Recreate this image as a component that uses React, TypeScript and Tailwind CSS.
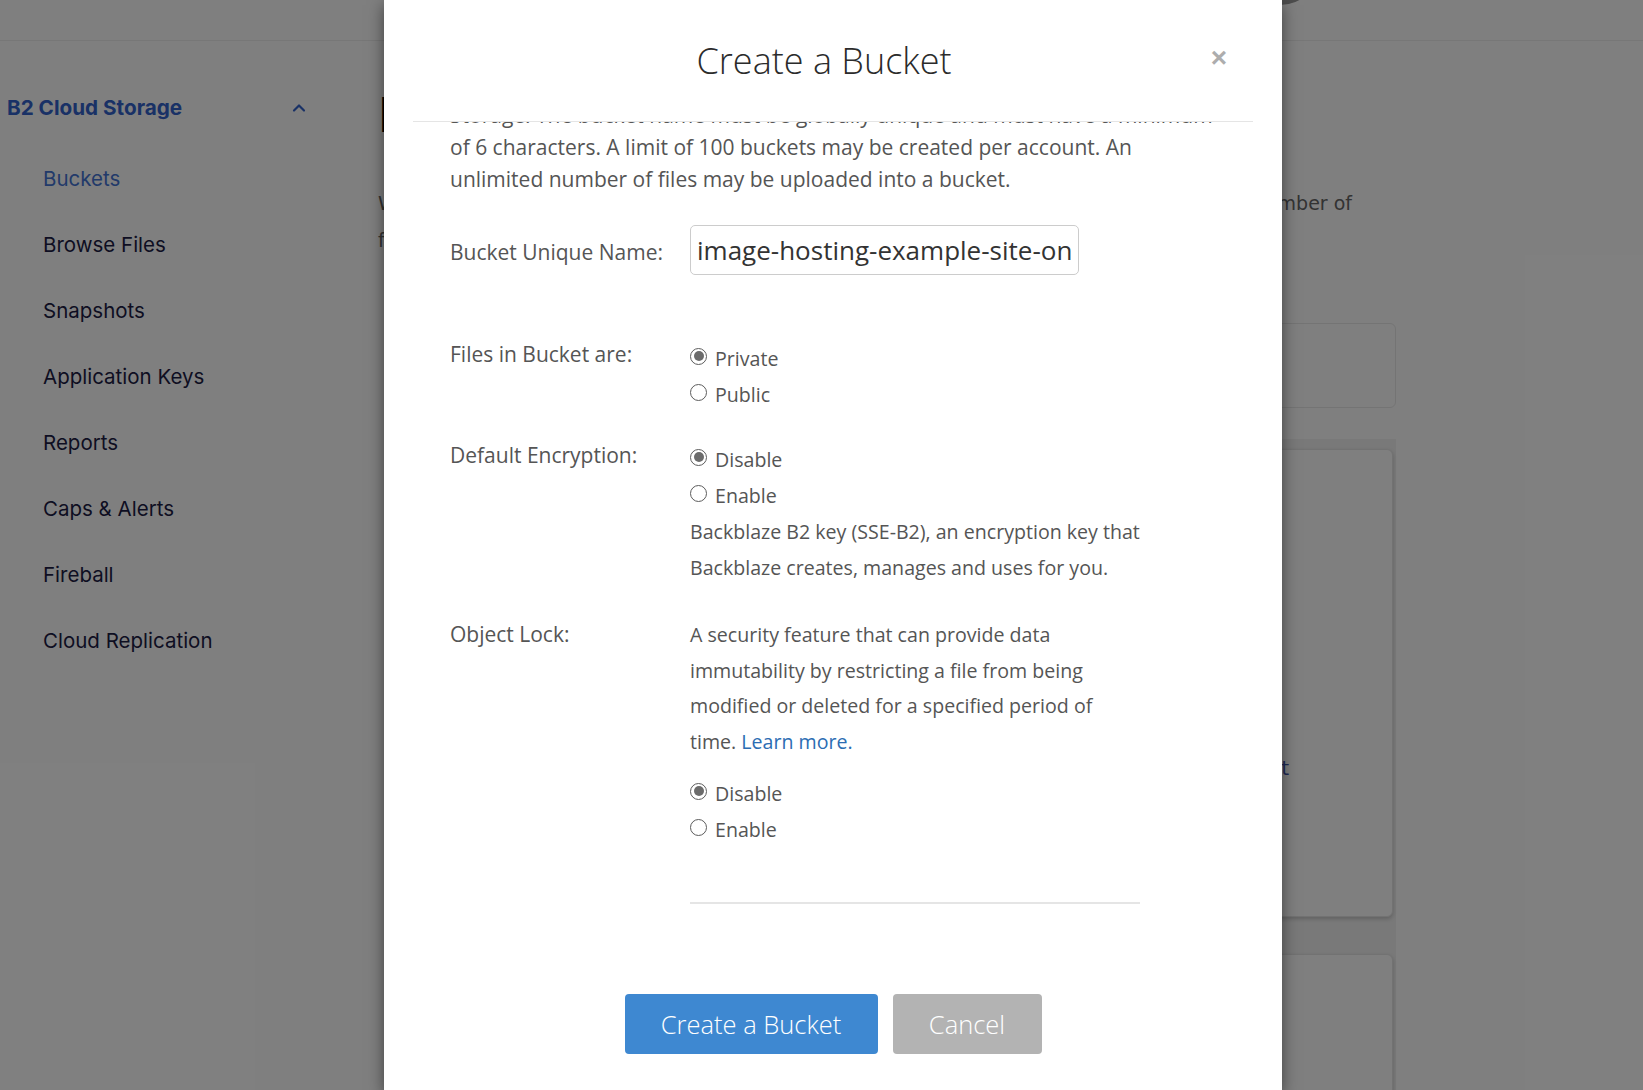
import React from 'react';
import { ChevronUp } from 'lucide-react';

const navItems = [
  'Buckets',
  'Browse Files',
  'Snapshots',
  'Application Keys',
  'Reports',
  'Caps & Alerts',
  'Fireball',
  'Cloud Replication',
];

const Radio: React.FC<{ checked?: boolean; label: string }> = ({ checked, label }) => (
  <div className="flex h-[36px] items-center">
    <span className="flex h-[17px] w-[17px] shrink-0 items-center justify-center rounded-full border border-[#5c5c5c] bg-white">
      {checked && <span className="h-[10px] w-[10px] rounded-full bg-[#6b6b6b]" />}
    </span>
    <span className="ml-[8px] pt-[5px] text-[19.6px] text-[#555]">{label}</span>
  </div>
);

const FormRow: React.FC<{ label: string; className?: string; labelClass?: string; children: React.ReactNode }> = ({
  label,
  className = '',
  labelClass = '',
  children,
}) => (
  <div className={`flex ${className}`}>
    <div className={`w-[240px] shrink-0 text-[21px] leading-[36px] text-[#555] ${labelClass}`}>{label}</div>
    <div className="flex-1">{children}</div>
  </div>
);

export default function App() {
  return (
    <div className="relative h-[1090px] w-[1643px] overflow-hidden bg-white font-['Inter',sans-serif]">
      {/* page behind the dialog */}
      <header className="relative h-[41px] border-b border-[#efefef]">
        <div className="absolute left-[1240px] top-[-75px] h-[80px] w-[80px] rounded-full bg-[#9a9a9a]" />
      </header>

      <div className="flex">
        <aside className="w-[376px] shrink-0 pl-[7px] pt-[47px]">
          <div className="flex h-[40px] w-[302px] items-center justify-between">
            <span className="text-[20.7px] font-bold text-[#3262cc]">B2 Cloud Storage</span>
            <ChevronUp className="h-[20px] w-[20px] text-[#3262cc]" strokeWidth={2.6} />
          </div>
          <nav className="mt-[18px] pl-[36px]">
            {navItems.map((item, i) => (
              <div
                key={item}
                className={`flex h-[66px] items-center text-[20.5px] ${i === 0 ? 'text-[#4474d4]' : 'text-[#1c1c45]'}`}
              >
                {item}
              </div>
            ))}
          </nav>
        </aside>

        <main className="w-[1020px] shrink-0 pt-[50px] font-['DejaVu_Sans',sans-serif]">
          <h1 className="pl-[2px] font-['Inter',sans-serif] text-[48px] leading-[48px] text-black">Buckets</h1>
          <div className="mt-[46px] w-[976px] pl-[2px] text-[19px] leading-[37px] text-[#666]">
            <div className="flex justify-between">
              <span>With B2 Cloud Storage you can create buckets and</span>
              <span>store an unlimited number of</span>
            </div>
            <div>files in each bucket.</div>
          </div>
          <div className="ml-[30px] mt-[64px] h-[85px] rounded-[6px] border border-[#e8e8e8]" />
          <div className="ml-[30px] mt-[31px] bg-[#f2f2f2] pr-[3px] pt-[10px]">
            <div className="h-[468px] rounded-[6px] border border-[#e5e5e5] bg-white pt-[305px] shadow-[0_2px_4px_rgba(0,0,0,0.2)]">
              <div className="flex justify-end pr-[103px] text-[20px] leading-[26px] text-[#3e54aa]">Create Snapshot</div>
            </div>
            <div className="mt-[37px] h-[300px] rounded-[6px] border border-[#e5e5e5] bg-white shadow-[0_2px_4px_rgba(0,0,0,0.2)]" />
          </div>
        </main>
      </div>

      {/* overlay + dialog */}
      <div className="absolute inset-0 bg-black/50">
        <div className="ml-[384px] flex h-[1090px] w-[898px] flex-col overflow-hidden bg-white font-['Open_Sans',sans-serif] shadow-[0_5px_15px_rgba(0,0,0,0.5)]">
          <div className="relative mx-[29px] flex h-[122px] shrink-0 items-center border-b border-[#e5e5e5] bg-white">
            <h2 className="flex-1 pr-[18px] text-center text-[36px] font-light text-[#2b2b2b]">Create a Bucket</h2>
            <span className="absolute right-[26px] top-[44px] font-['Liberation_Sans',sans-serif] text-[28px] font-bold leading-[28px] text-[#adadad]">
              ×
            </span>
          </div>

          <div className="flex-1 overflow-hidden px-[66px]">
            <div className="-mt-[55px]">
              <p className="whitespace-nowrap text-[21px] leading-[32px] text-[#555]">
                A bucket is a container that holds files that are uploaded into B2 Cloud
                <br />
                Storage. The bucket name must be globally unique and must have a minimum
                <br />
                of 6 characters. A limit of 100 buckets may be created per account. An
                <br />
                unlimited number of files may be uploaded into a bucket.
              </p>

              <FormRow label="Bucket Unique Name:" className="mt-[30px] items-center" labelClass="pt-[4px]">
                <input
                  readOnly
                  value="image-hosting-example-site-one"
                  className="h-[50px] w-[389px] rounded-[5px] border border-[#cccccc] px-[6px] text-[26px] text-[#333] outline-none"
                />
              </FormRow>

              <FormRow label="Files in Bucket are:" className="mt-[61px]">
                <div className="pt-[2px]">
                  <Radio checked label="Private" />
                  <Radio label="Public" />
                </div>
              </FormRow>

              <FormRow label="Default Encryption:" className="mt-[27px]">
                <div className="pt-[2px]">
                  <Radio checked label="Disable" />
                  <Radio label="Enable" />
                  <p className="mt-[3px] whitespace-nowrap text-[19.6px] leading-[36px] text-[#555]">
                    Backblaze B2 key (SSE-B2), an encryption key that
                    <br />
                    Backblaze creates, manages and uses for you.
                  </p>
                </div>
              </FormRow>

              <FormRow label="Object Lock:" className="mt-[30px]">
                <p className="whitespace-nowrap pt-[1px] text-[19.6px] leading-[35.5px] text-[#555]">
                  A security feature that can provide data
                  <br />
                  immutability by restricting a file from being
                  <br />
                  modified or deleted for a specified period of
                  <br />
                  time. <a className="text-[#2c6db3]">Learn more.</a>
                </p>
                <div className="mt-[14px]">
                  <Radio checked label="Disable" />
                  <Radio label="Enable" />
                </div>
              </FormRow>

              <div className="ml-[240px] mt-[57px] h-[2px] w-[450px] bg-[#e5e5e5]" />

              <div className="mt-[90px] flex justify-center gap-[15px]">
                <button className="h-[60px] w-[253px] rounded-[4px] bg-[#3e88d1] text-[25.5px] font-light text-white">
                  Create a Bucket
                </button>
                <button className="h-[60px] w-[149px] rounded-[4px] bg-[#b3b3b3] text-[25.5px] font-light text-white">
                  Cancel
                </button>
              </div>
            </div>
          </div>
        </div>
      </div>
    </div>
  );
}
